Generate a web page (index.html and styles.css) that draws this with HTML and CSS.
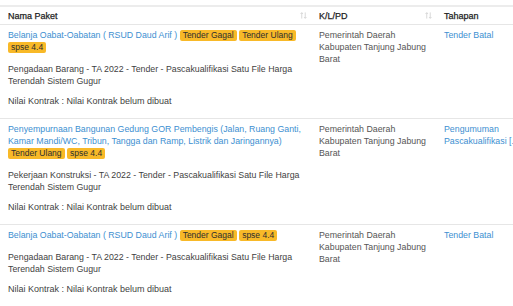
FILE: index.html
```html
<!DOCTYPE html>
<html lang="id">
<head>
<meta charset="utf-8">
<title>Daftar Paket</title>
<link rel="stylesheet" href="styles.css">
</head>
<body>
<div class="wrap">
<table class="tbl">
  <colgroup>
    <col class="c1"><col class="c2"><col class="c3">
  </colgroup>
  <thead>
    <tr>
      <th><div class="th-in"><span>Nama Paket</span><svg class="sort" viewBox="0 0 8 8" width="7" height="7"><path d="M2 7.5V0.8M0.6 2.2L2 0.8L3.4 2.2M6 0.5V7.2M4.6 5.8L6 7.2L7.4 5.8"/></svg></div></th>
      <th><div class="th-in"><span>K/L/PD</span><svg class="sort" viewBox="0 0 8 8" width="7" height="7"><path d="M2 7.5V0.8M0.6 2.2L2 0.8L3.4 2.2M6 0.5V7.2M4.6 5.8L6 7.2L7.4 5.8"/></svg></div></th>
      <th><div class="th-in"><span>Tahapan</span></div></th>
    </tr>
  </thead>
  <tbody>
    <tr>
      <td class="main">
        <div class="title"><a class="link" href="#">Belanja Oabat-Oabatan ( RSUD Daud Arif )</a> <span class="tag">Tender Gagal</span> <span class="tag">Tender Ulang</span> <span class="tag">spse 4.4</span></div>
        <p class="desc">Pengadaan Barang - TA 2022 - Tender - Pascakualifikasi Satu File Harga Terendah Sistem Gugur</p>
        <p class="nilai">Nilai Kontrak : Nilai Kontrak belum dibuat</p>
      </td>
      <td class="klpd">Pemerintah Daerah Kabupaten Tanjung Jabung Barat</td>
      <td><a class="link" href="#">Tender Batal</a></td>
    </tr>
    <tr>
      <td class="main">
        <div class="title"><a class="link" href="#">Penyempurnaan Bangunan Gedung GOR Pembengis (Jalan, Ruang Ganti, Kamar Mandi/WC, Tribun, Tangga dan Ramp, Listrik dan Jaringannya)</a> <span class="tag">Tender Ulang</span> <span class="tag">spse 4.4</span></div>
        <p class="desc">Pekerjaan Konstruksi - TA 2022 - Tender - Pascakualifikasi Satu File Harga Terendah Sistem Gugur</p>
        <p class="nilai">Nilai Kontrak : Nilai Kontrak belum dibuat</p>
      </td>
      <td class="klpd">Pemerintah Daerah Kabupaten Tanjung Jabung Barat</td>
      <td><a class="link" href="#">Pengumuman Pascakualifikasi [...]</a></td>
    </tr>
    <tr>
      <td class="main">
        <div class="title"><a class="link" href="#">Belanja Oabat-Oabatan ( RSUD Daud Arif )</a> <span class="tag">Tender Gagal</span> <span class="tag">spse 4.4</span></div>
        <p class="desc">Pengadaan Barang - TA 2022 - Tender - Pascakualifikasi Satu File Harga Terendah Sistem Gugur</p>
        <p class="nilai">Nilai Kontrak : Nilai Kontrak belum dibuat</p>
      </td>
      <td class="klpd">Pemerintah Daerah Kabupaten Tanjung Jabung Barat</td>
      <td><a class="link" href="#">Tender Batal</a></td>
    </tr>
  </tbody>
</table>
</div>
</body>
</html>
```

FILE: styles.css
```css
html, body {
  margin: 0;
  padding: 0;
  background: #ffffff;
}
body {
  font-family: "Liberation Sans", Arial, sans-serif;
  font-size: 8.8px;
  line-height: 12px;
  color: #4a4a4a;
}
.wrap {
  padding-top: 5px;
  width: 513px;
  overflow: hidden;
}
.tbl {
  border-collapse: collapse;
  table-layout: fixed;
  width: 552px;
  border-top: 2px solid #ececec;
}
.c1 { width: 311px; }
.c2 { width: 125px; }
.c3 { width: 116px; }
.tbl th {
  text-align: left;
  font-weight: normal;
  font-size: 9px;
  color: #222222;
  padding: 0 4px 0 8px;
  height: 17px;
  border-bottom: 1px solid #e6e6e6;
  -webkit-text-stroke: 0.25px #222;
}
.th-in {
  display: flex;
  justify-content: space-between;
  align-items: center;
}
.sort {
  fill: none;
  stroke: #cfcfcf;
  stroke-width: 0.9;
}
.tbl td {
  vertical-align: top;
  padding: 4px 4px 11px 8px;
  border-bottom: 1px solid #e6e6e6;
}
.tbl td.main {
  padding-right: 2px;
}
.link {
  color: #3d8fd1;
  text-decoration: none;
}
.tag {
  display: inline-block;
  background: #f8b928;
  color: #2e2e2e;
  font-size: 8.5px;
  line-height: 11px;
  padding: 0 3px;
  border-radius: 2px;
  vertical-align: baseline;
}
.desc {
  margin: 10px 0 0;
  color: #3f3f3f;
}
.nilai {
  margin: 8px 0 0;
  font-size: 9px;
  color: #3f3f3f;
}
.klpd {
  color: #555555;
}
```
